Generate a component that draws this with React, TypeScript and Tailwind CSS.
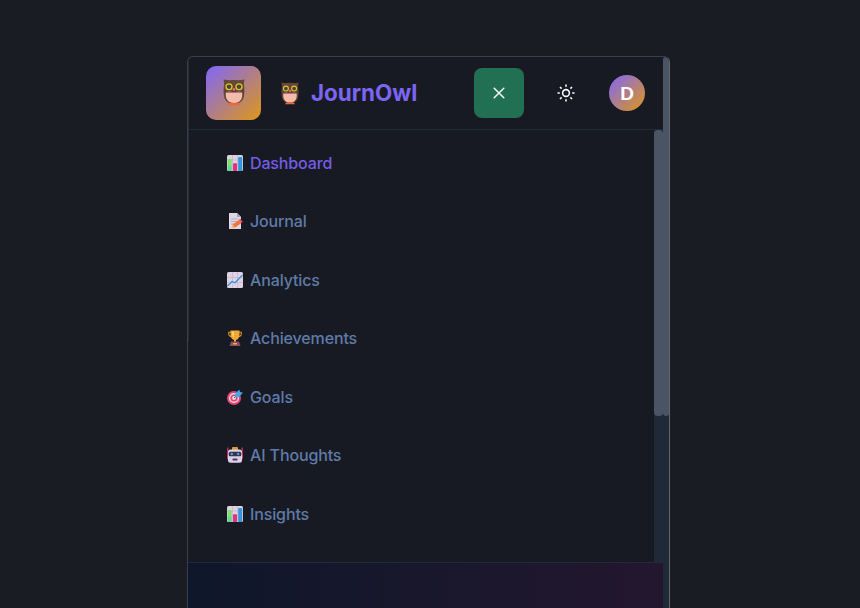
import type { ReactNode } from "react";

function Owl({ className }: { className: string }) {
  return (
    <svg viewBox="0 0 22 28" preserveAspectRatio="none" className={className} aria-hidden="true">
      <path d="M.5.500C4 1 6 1.500 8 1h6c2 .5 4 0 7.500-.5l-.8 5c1 4 .8 9 .3 12-.7 5-4 8-10 8S1.700 22.500 1 17.500c-.5-3-.7-8 .3-12z" fill="#654637" />
      <path d="M3 13h16c1.200 7-1.500 12-8 12S1.800 20 3 13z" fill="#f3bbaa" />
      <path d="M1.500 11.500c3 2 6 2 9.500.5 3.500 1.500 6.500 1.500 9.500-.5V14h-19z" fill="#60394a" />
      <circle cx="6" cy="8" r="3" fill="#4e4335" stroke="#d9c92d" strokeWidth="1.300" />
      <circle cx="16" cy="8" r="3" fill="#4e4335" stroke="#d9c92d" strokeWidth="1.300" />
      <path d="m9.300 10.500 1.700-1.300 1.700 1.300L11 12.800z" fill="#fa6b48" />
      <path d="M6 25h10l1 2.200H5z" fill="#f0653f" />
    </svg>
  );
}

function Icon({ children }: { children: ReactNode }) {
  return (
    <svg viewBox="0 0 16 16" className="h-4 w-4 shrink-0" aria-hidden="true">
      {children}
    </svg>
  );
}

function BarsIcon() {
  return (
    <Icon>
      <rect width="16" height="16" rx="1.500" fill="#ddd2e2" />
      <path d="M0 5h16M0 10h16M5.500 0v16M10.500 0v16" stroke="#bcafc8" strokeWidth=".6" />
      <rect x=".7" y="4" width="4" height="12" rx=".8" fill="#81df70" />
      <rect x=".7" y="11" width="4" height="5" fill="#60d69a" />
      <rect x="6" y="8.300" width="4" height="7.700" rx=".8" fill="#df347d" />
      <rect x="11.200" y="2" width="4" height="14" rx=".8" fill="#3295de" />
    </Icon>
  );
}

function MemoIcon() {
  return (
    <Icon>
      <path d="M2 0h8l4 4v12H2z" fill="#ded8e2" />
      <path d="M10 0v4h4z" fill="#aaa0b5" />
      <path d="M4 6h7M4 8.500h7M4 11h5" stroke="#b6acbd" />
      <path d="m4.700 15 .8-3.200 6.500-5 2.700 3-6.500 4.700z" fill="#f3743b" />
      <path d="m12 6.800 1.300-1 2.500 2.900-1.100 1.100z" fill="#ed4165" />
      <path d="m4.700 15 .8-3.200 2.700 2.700z" fill="#f5be72" />
    </Icon>
  );
}

function ChartIcon() {
  return (
    <Icon>
      <rect width="16" height="16" rx="1.500" fill="#ddd3e4" />
      <path d="M0 5.500h16M0 10.500h16M5.500 0v16M10.500 0v16" stroke="#c1b3cf" strokeWidth=".7" />
      <path d="m.3 14 4.700-4.500 3 1.300L15.700 3" fill="none" stroke="#348fd8" strokeWidth="1.300" />
    </Icon>
  );
}

function TrophyIcon() {
  return (
    <Icon>
      <path d="M4 2.200H1.700v1.500c0 1.800 1 2.800 3.500 2.800M12 2.200h2.300v1.500c0 1.800-1 2.800-3.500 2.800" fill="none" stroke="#d99035" strokeWidth="1.100" />
      <path d="M3.500.5h9v4.500c0 3-2 4.500-3.500 5v2H7v-2c-1.500-.5-3.500-2-3.500-5z" fill="#f5a535" />
      <path d="M5 1.500h2v6C5.500 6.500 5 5 5 1.500z" fill="#ffd45b" />
      <path d="M4 11.500h8l1.500 4.500h-11z" fill="#874f60" />
      <path d="M6 13h4v1.500H6z" fill="#efad48" />
    </Icon>
  );
}

function GoalIcon() {
  return (
    <Icon>
      <circle cx="7" cy="9" r="7" fill="#e84270" />
      <circle cx="7" cy="9" r="5.100" fill="#e4d4e1" />
      <circle cx="7" cy="9" r="3.600" fill="#e84270" />
      <circle cx="7" cy="9" r="1.900" fill="#ead7e2" />
      <path d="m7 9 5-5" stroke="#4772a3" />
      <path d="m7.500 5.500 4.800-5 .7 2.500 3 .7-4.800 4.800-2.700-.2z" fill="#40a9e6" />
    </Icon>
  );
}

function RobotIcon() {
  return (
    <Icon>
      <path d="M.8.500v9M15.200.5v9" stroke="#df3158" strokeWidth="1.200" />
      <rect x="5" width="6" height="4" rx="1" fill="#d69b35" />
      <rect y="6" width="16" height="7" rx="2" fill="#ce3864" />
      <rect x="1" y="2.500" width="14" height="13.200" rx="2.500" fill="#dfcee7" />
      <rect x="1.700" y="4.800" width="12.600" height="4.500" rx="1.500" fill="#37334c" />
      <circle cx="4.800" cy="7" r="1.200" fill="#43a7df" />
      <circle cx="11.200" cy="7" r="1.200" fill="#43a7df" />
      <rect x="5.500" y="11.500" width="5" height="1.900" rx=".6" fill="#493d57" />
    </Icon>
  );
}

const items = [
  { label: "Dashboard", icon: <BarsIcon />, active: true },
  { label: "Journal", icon: <MemoIcon /> },
  { label: "Analytics", icon: <ChartIcon /> },
  { label: "Achievements", icon: <TrophyIcon /> },
  { label: "Goals", icon: <GoalIcon /> },
  { label: "AI Thoughts", icon: <RobotIcon /> },
  { label: "Insights", icon: <BarsIcon /> },
];

export default function App() {
  return (
    <div className="flex h-[608px] w-[860px] items-start overflow-hidden bg-[#1a1c24] pt-14 pl-[187px] font-['Inter',sans-serif]">
      <div className="relative flex h-[560px] w-[483px] shrink-0 overflow-hidden rounded-t-md border border-b-0 border-[#3b3e49] border-r-[#636873] bg-[#171a22]">
        <div className="absolute top-0 left-0 h-[285px] w-px bg-[#272b34]" />
        <main className="flex w-[475px] shrink-0 flex-col">
          <header className="flex h-[73px] shrink-0 items-center border-b border-[#212a37] pl-[18px]">
            <div className="flex h-[54px] w-[55px] items-center justify-center rounded-[10px] bg-linear-to-br/srgb from-[#8066fa] to-[#df9716] pb-0.5">
              <Owl className="h-[27px] w-[22px]" />
            </div>
            <Owl className="ml-5 h-[23px] w-[18px]" />
            <h1 className="ml-3 w-[107px] text-[22.400px] leading-8 font-bold text-[#7c65f3]">JournOwl</h1>
            <button aria-label="Close menu" className="ml-14 flex h-[50px] w-[50px] items-center justify-center rounded-lg bg-[#227054]">
              <svg viewBox="0 0 16 16" className="h-4 w-4" fill="none" stroke="#f7fafc" strokeWidth="1.500" strokeLinecap="round">
                <path d="m3.200 3.200 9.600 9.600m0-9.600-9.600 9.600" />
              </svg>
            </button>
            <button aria-label="Toggle theme" className="ml-[33px] flex h-[18px] w-[18px] items-center justify-center">
              <svg viewBox="0 0 18 18" className="h-[18px] w-[18px]" fill="none" stroke="#f7fafc" strokeWidth="1.600">
                <circle cx="9" cy="9" r="3.400" />
                <path d="M9 .5v2.300m0 12.400v2.300M.5 9h2.300m12.400 0h2.300M3 3l1.600 1.600m8.800 8.800L15 15M3 15l1.600-1.600m8.800-8.800L15 3" />
              </svg>
            </button>
            <div className="ml-[34px] flex h-9 w-9 items-center justify-center rounded-full bg-linear-to-br/srgb from-[#8066fa] to-[#df9716] font-['Liberation_Sans',sans-serif] text-[19px] leading-none font-bold text-white">D</div>
          </header>
          <div className="flex h-[432px] shrink-0">
            <nav className="flex w-[466px] flex-col pt-[3.500px]">
              {items.map((item) => (
                <a key={item.label} className={`flex h-[58.500px] shrink-0 items-center gap-[7px] pl-[39px] text-base font-medium tracking-[-0.13px] ${item.active ? "text-[#755ce5]" : "text-[#5f7ba9]"}`}>
                  {item.icon}
                  <span>{item.label}</span>
                </a>
              ))}
            </nav>
            <div className="w-[9px] bg-[#202938]">
              <div className="h-[286px] rounded-[4px] bg-[#4a5464]" />
            </div>
          </div>
          <div className="h-12 shrink-0 border-t border-[#202b39] bg-linear-to-r/srgb from-[#0e172b] via-[#19172c] to-[#23172e]" />
        </main>
        <div className="w-[6px] shrink-0 bg-[#202938]">
          <div className="h-[359px] rounded-[4px] bg-[#4a5464]" />
        </div>
      </div>
    </div>
  );
}
